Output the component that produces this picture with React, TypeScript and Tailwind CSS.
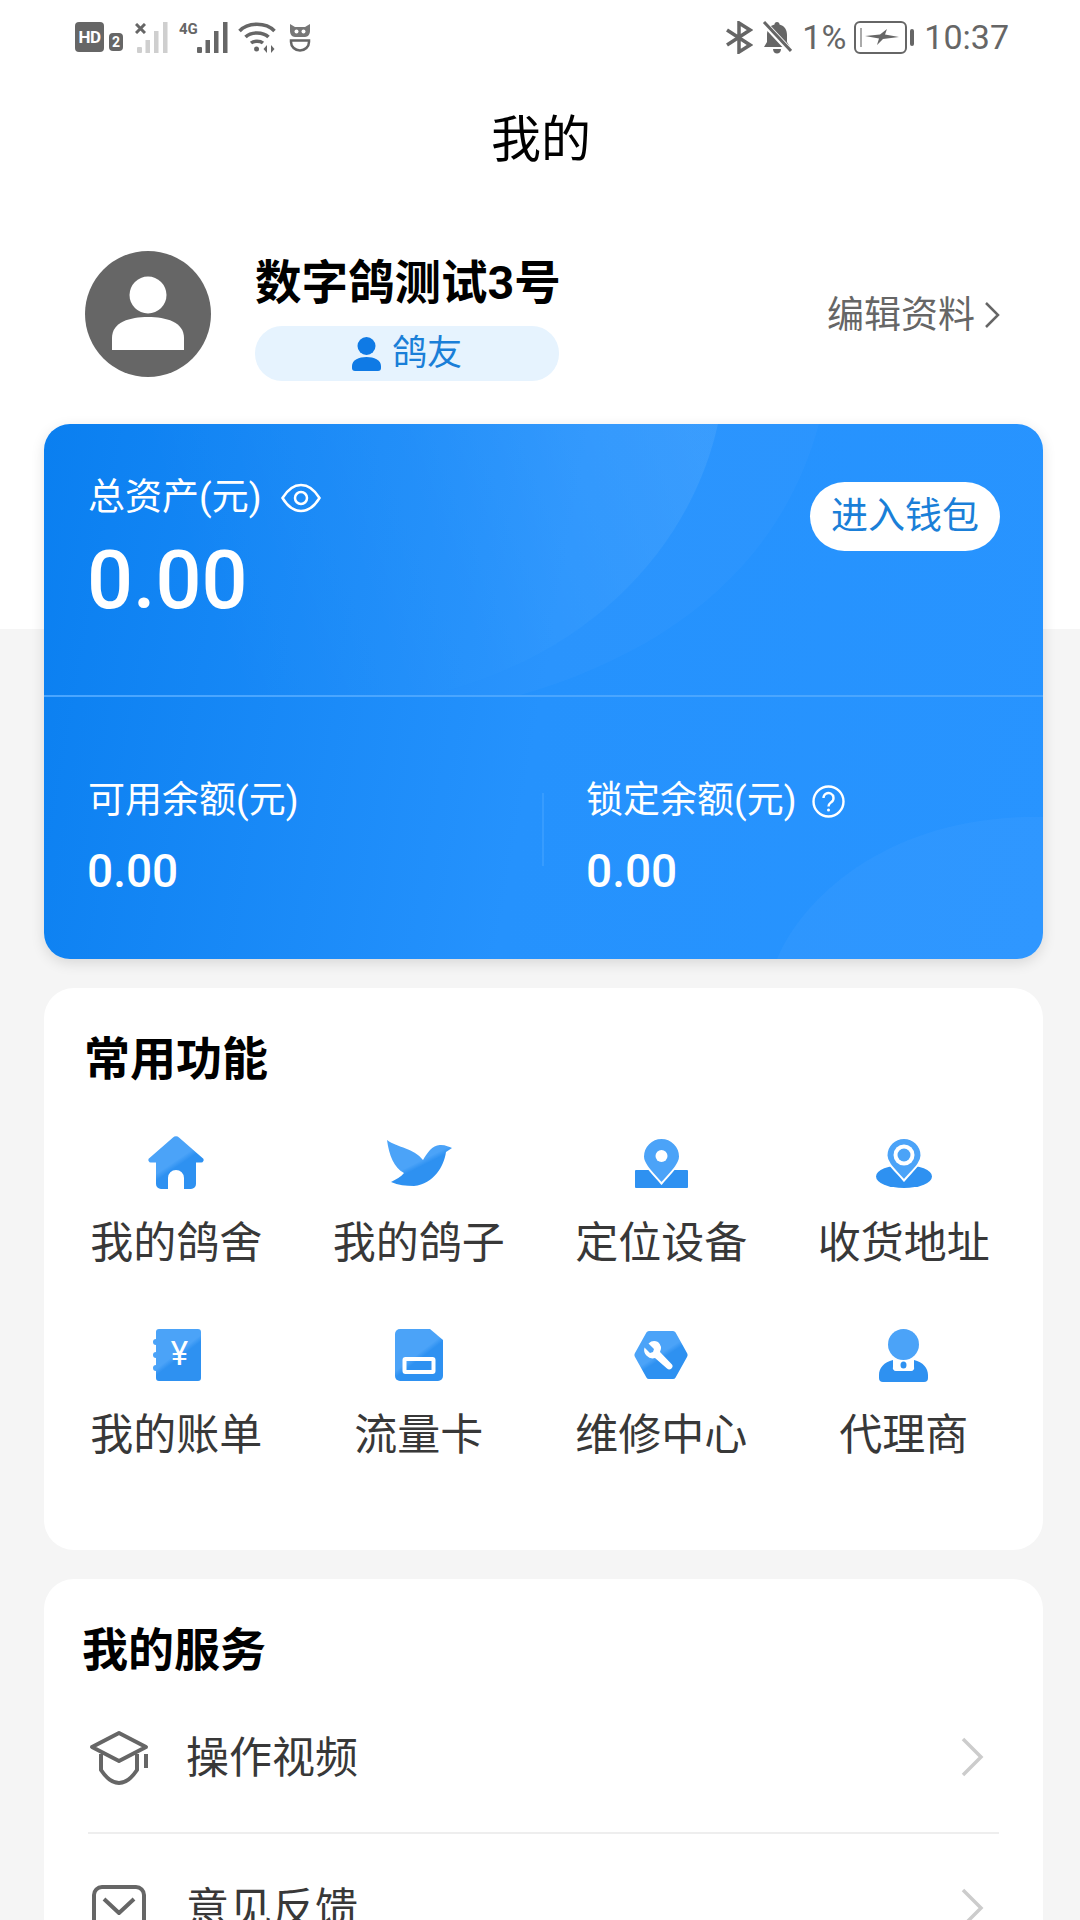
import React from 'react'

const cjk = '[font-family:Roboto,"Noto_Sans_CJK_SC",sans-serif]'

const SvgDefs = () => (
    <svg width="0" height="0" className="block">
        <defs>
            <linearGradient id="iconBlue" x1="0.2" y1="0.1" x2="0.8" y2="0.95">
                <stop offset="0.45" stopColor="#4ba3f8" />
                <stop offset="0.55" stopColor="#2e91f1" />
            </linearGradient>
            <linearGradient id="cardGlow" x1="0" y1="0.5" x2="1" y2="0.35">
                <stop offset="0.2" stopColor="#fff" stopOpacity="0" />
                <stop offset="0.6" stopColor="#fff" stopOpacity="0.03" />
                <stop offset="1" stopColor="#fff" stopOpacity="0.09" />
            </linearGradient>
        </defs>
    </svg>
)

const HomeIcon = () => (
    <svg width="56" height="54" viewBox="0 0 56 54">
        <path fill="url(#iconBlue)" d="M25 1.5a4 4 0 0 1 6 0L54.500 22a2.500 2.500 0 0 1-2 4.500H48V48a5 5 0 0 1-5 5H36V42a8 8 0 0 0-16 0V53H13a5 5 0 0 1-5-5V26.500H3.500A2.500 2.500 0 0 1 1.500 22Z" />
    </svg>
)

const BirdIcon = () => (
    <svg width="66" height="46" viewBox="0 0 66 46">
        <path fill="url(#iconBlue)" d="M1 0C12 8 28 8 37 20C41 13 47 4 55 5C60 5 63 7 66 8L60 12C58 26 48 44 28 46C20 46 12 45 5 42C10 39 15 37 18 33C8 28 3 15 1 0Z" />
    </svg>
)

const MapPinIcon = () => (
    <svg width="53" height="50" viewBox="0 0 53 50">
        <path fill="#2e91f1" d="M1 32H52a1 1 0 0 1 1 1V49a1 1 0 0 1-1 1H1a1 1 0 0 1-1-1V33a1 1 0 0 1 1-1Z" />
        <path fill="#4ba3f8" stroke="#fff" strokeWidth="2" d="M26.500 0a18.500 18.500 0 0 1 18.500 18.500c0 8-10 17-18.500 27C18 35.500 8 26.500 8 18.500A18.500 18.500 0 0 1 26.500 0Z" />
        <circle cx="26.500" cy="18" r="6" fill="#fff" />
    </svg>
)

const AddressIcon = () => (
    <svg width="56" height="50" viewBox="0 0 56 50">
        <ellipse cx="28" cy="38.500" rx="28" ry="11.500" fill="#2e91f1" />
        <path fill="#4ba3f8" stroke="#fff" strokeWidth="2" d="M28 0a17.500 17.500 0 0 1 17.500 17.500c0 8-9 15-17.500 25C20 33 10.500 25.500 10.500 17.500A17.500 17.500 0 0 1 28 0Z" />
        <circle cx="28" cy="17" r="10.500" fill="#fff" />
        <circle cx="28" cy="17" r="6.500" fill="#4ba3f8" />
    </svg>
)

const BillIcon = () => (
    <svg width="49" height="52" viewBox="0 0 49 52">
        <path fill="url(#iconBlue)" d="M7 0H46a3 3 0 0 1 3 3V49a3 3 0 0 1-3 3H7a3 3 0 0 1-3-3V42a3 3 0 0 1 0-6V29a3 3 0 0 1 0-6V16a3 3 0 0 1 0-6V3a3 3 0 0 1 3-3Z" />
        <text x="27.500" y="36" textAnchor="middle" fontSize="33" fontFamily="Roboto" fill="#fff">¥</text>
    </svg>
)

const SimIcon = () => (
    <svg width="48" height="52" viewBox="0 0 48 52">
        <path fill="url(#iconBlue)" d="M5 0H35L48 11V47a5 5 0 0 1-5 5H5a5 5 0 0 1-5-5V5a5 5 0 0 1 5-5Z" />
        <rect x="9.500" y="30" width="29" height="13" rx="1" fill="none" stroke="#fff" strokeWidth="4" />
    </svg>
)

const RepairIcon = () => (
    <svg width="54" height="48" viewBox="0 0 54 48">
        <path fill="url(#iconBlue)" d="M15 0H39a3 3 0 0 1 2.600 1.500L53 22a4 4 0 0 1 0 4L41.600 46.500A3 3 0 0 1 39 48H15a3 3 0 0 1-2.600-1.500L1 26a4 4 0 0 1 0-4L12.400 1.500A3 3 0 0 1 15 0Z" />
        <path fill="#fff" d="M24 11a8.500 8.500 0 0 0-9.500 1.500L20 18l-1 3-3 1-5.500-5.500A8.500 8.500 0 0 0 21 27l12 10.500a3 3 0 0 0 4.500-4.500L26 21a8.500 8.500 0 0 0-2-10Z" />
    </svg>
)

const AgentIcon = () => (
    <svg width="49" height="53" viewBox="0 0 49 53">
        <circle cx="24.500" cy="15.500" r="15.500" fill="#4ba3f8" />
        <path fill="#2e91f1" d="M14 31V38a3 3 0 0 0 3 4H32a3 3 0 0 0 3-4V31C44 33 49 39 49 46V49a4 4 0 0 1-4 4H4a4 4 0 0 1-4-4V46C0 39 5 33 14 31Z" />
        <ellipse cx="24.500" cy="36" rx="3" ry="3.500" fill="#2e91f1" />
    </svg>
)

const features = [
    { name: '我的鸽舍', icon: <HomeIcon /> },
    { name: '我的鸽子', icon: <BirdIcon /> },
    { name: '定位设备', icon: <MapPinIcon /> },
    { name: '收货地址', icon: <AddressIcon /> },
    { name: '我的账单', icon: <BillIcon /> },
    { name: '流量卡', icon: <SimIcon /> },
    { name: '维修中心', icon: <RepairIcon /> },
    { name: '代理商', icon: <AgentIcon /> },
]

function Signal({ color, dim }: { color: string; dim?: boolean }) {
    return (
        <svg width="31" height="31" viewBox="0 0 31 31" className={dim ? 'opacity-40' : ''}>
            <rect x="0" y="25" width="5" height="6" rx="1" fill={color} />
            <rect x="8.500" y="18" width="4.500" height="13" fill={color} />
            <rect x="17" y="9" width="4.500" height="22" fill={color} />
            <rect x="26" y="0" width="4.500" height="31" fill={color} />
        </svg>
    )
}

function StatusBar() {
    return (
        <div className="flex h-[72px] items-center justify-between pl-[75px] pr-[71px] pt-[2px] text-[#666]">
            <div className="flex items-center">
                <div className="flex h-[30px] w-[29px] items-center justify-center rounded-[4px] bg-[#666] font-['Roboto'] text-[17px] font-bold leading-none tracking-[-0.5px] text-white">HD</div>
                <div className="ml-[5px] mt-[10px] flex h-[18px] w-[14px] items-center justify-center rounded-[4px] bg-[#666] font-['Roboto'] text-[14px] font-bold leading-none text-white">2</div>
                <div className="relative ml-[12px] h-[31px] w-[33px]">
                    <svg width="11" height="11" viewBox="0 0 11 11" className="absolute left-0 top-[1px]">
                        <path d="M1 1L10 10M10 1L1 10" stroke="#666" strokeWidth="3" />
                    </svg>
                    <div className="absolute bottom-0 right-0 h-[31px] w-[31px]"><Signal color="#888" dim /></div>
                </div>
                <div className="relative ml-[11px] h-[31px] w-[49px]">
                    <span className="absolute left-0 top-[-3px] font-['Roboto'] text-[15px] font-bold leading-[20px]">4G</span>
                    <div className="absolute bottom-0 right-0"><Signal color="#666" /></div>
                </div>
                <svg width="38" height="31" viewBox="0 0 38 31" className="ml-[10px]" fill="none" stroke="#666" strokeWidth="3.500">
                    <path d="M1.500 9C10 0 28 0 36.500 9" />
                    <path d="M7.500 15C13 9.500 25 9.500 30.500 15" />
                    <path d="M13 21C16 18.500 22 18.500 25 21" />
                    <circle cx="18.500" cy="27" r="2.500" fill="#666" stroke="none" />
                    <path d="M29 23L25.500 27L29 31ZM33 23L36.500 27L33 31Z" fill="#666" stroke="none" />
                </svg>
                <svg width="22" height="29" viewBox="0 0 22 29" className="ml-[13px]">
                    <path fill="#777" d="M1 8L1 1L6 4H16L21 1V8C21 11 19 14 16 14H6C3 14 1 11 1 8Z" />
                    <circle cx="7.500" cy="8.500" r="2" fill="#fff" />
                    <circle cx="14.500" cy="8.500" r="2" fill="#fff" />
                    <path fill="none" stroke="#666" strokeWidth="2.500" d="M2 17.500H20V19a9 8.500 0 0 1-18 0Z" />
                </svg>
            </div>
            <div className="flex items-center">
                <svg width="28" height="33" viewBox="0 0 28 33" fill="none" stroke="#666" strokeWidth="3.500">
                    <path d="M2 9L25 24L14 31V2L25 9L2 24" />
                </svg>
                <svg width="30" height="33" viewBox="0 0 30 33" className="ml-[9px]">
                    <path fill="#666" d="M15 1a2.500 2.500 0 0 1 2.500 2.500C23 5 25 9 25 14V21L28 26H2L5 21V14C5 9 7 5 12.500 3.500A2.500 2.500 0 0 1 15 1Z" />
                    <path d="M11 28H19C19 31 17 32.500 15 32.500S11 31 11 28Z" fill="#666" />
                    <path d="M1 1L30 32" stroke="#fff" strokeWidth="6" />
                    <path d="M2 1L29 30" stroke="#666" strokeWidth="3" />
                </svg>
                <span className="ml-[10px] font-['Roboto'] text-[34px] leading-none">1%</span>
                <div className="ml-[8px] flex h-[33px] w-[53px] items-center rounded-[6px] border-[2.5px] border-[#666] pl-[4px]">
                    <div className="h-[19px] w-[1.5px] bg-[#aaa]" />
                    <svg width="34" height="18" viewBox="0 0 34 18" className="ml-[3px]">
                        <path fill="#666" d="M0 8L15 6.500 22 1 20 6.500 34 9 18 11 12 17 14 10.500Z" />
                    </svg>
                </div>
                <div className="ml-[3px] h-[17px] w-[4px] rounded-[2px] bg-[#666]" />
                <span className="ml-[10px] font-['Roboto'] text-[34px] leading-none">10:37</span>
            </div>
        </div>
    )
}

function Profile() {
    return (
        <div className="mt-[47px] flex h-[130px] pl-[85px] pr-[80px]">
            <div className="flex h-[126px] w-[126px] shrink-0 items-center justify-center rounded-full bg-[#666]">
                <svg width="76" height="76" viewBox="0 0 76 76">
                    <circle cx="38" cy="19" r="18.500" fill="#fff" />
                    <path fill="#fff" d="M2 74V62C2 46 20 41 38 41S74 46 74 62V74Z" />
                </svg>
            </div>
            <div className="ml-[44px] flex w-[304px] flex-col">
                <div className="h-[75px] whitespace-nowrap text-[46.500px] font-bold leading-[64px] text-black">数字鸽测试3号</div>
                <div className="flex h-[55px] items-center justify-center gap-[11px] rounded-[27px] bg-[#e6f3fe]">
                    <svg width="29" height="34" viewBox="0 0 29 34">
                        <circle cx="14.500" cy="9" r="9" fill="#0f7ae5" />
                        <path fill="#0f7ae5" d="M0 29C0 23 7 20 14.500 20S29 23 29 29V31a3 3 0 0 1-3 3H3a3 3 0 0 1-3-3Z" />
                    </svg>
                    <span className="text-[35px] leading-none text-[#1a7fd8]">鸽友</span>
                </div>
            </div>
            <div className="ml-auto flex h-[128px] items-center text-[#666]">
                <span className="text-[37px] leading-none">编辑资料</span>
                <svg width="16" height="28" viewBox="0 0 16 28" className="ml-[9px]" fill="none" stroke="#666" strokeWidth="2.500">
                    <path d="M2 2L14 14L2 26" />
                </svg>
            </div>
        </div>
    )
}

function WalletCard() {
    return (
        <div className="relative ml-[44px] mt-[43px] h-[535px] w-[999px] overflow-hidden rounded-[26px] bg-[linear-gradient(100deg,#0a7ff0_0%,#2592fd_50%,#2894ff_100%)] text-white shadow-[0_4px_14px_rgba(0,0,0,0.12)]">
            <svg width="999" height="535" viewBox="0 0 999 535" className="absolute inset-0">
                <path fill="#ffffff" fillOpacity="0.025" d="M775 0C740 130 640 225 470 273H380C560 230 650 110 674 0Z" />
                <path fill="url(#cardGlow)" d="M674 0C650 110 560 230 380 273H0V0Z" />
                <path fill="#ffffff" fillOpacity="0.035" d="M733 535C760 470 850 390 999 393V535Z" />
            </svg>
            <div className="relative h-[273px] border-b-2 border-[#4aa6ff] px-[44px]">
                <div className="flex items-center pt-[56px]">
                    <span className="text-[37px] leading-[36px]">总资产(元)</span>
                    <svg width="40" height="30" viewBox="0 0 40 30" className="ml-[19px]" fill="none" stroke="#fff" strokeWidth="2.500">
                        <path d="M1.500 15C7 6 13 2 20 2S33 6 38.500 15C33 24 27 28 20 28S7 24 1.500 15Z" />
                        <circle cx="20" cy="15" r="6" />
                    </svg>
                </div>
                <div className="ml-[-1px] mt-[25px] font-['Roboto'] text-[81px] font-medium leading-[80px]">0.00</div>
                <div className="absolute right-[43px] top-[58px] flex h-[69px] w-[190px] items-center justify-center rounded-[35px] bg-white text-[37px] leading-none text-[#1a7fd8]">进入钱包</div>
            </div>
            <div className="relative flex pt-[86px]">
                <div className="w-[498px] pl-[44px]">
                    <div className="text-[37px] leading-[36px]">可用余额(元)</div>
                    <div className="ml-[-1px] mt-[29px] font-['Roboto'] text-[46px] font-medium leading-[46px]">0.00</div>
                </div>
                <div className="mt-[10px] h-[73px] w-[2px] bg-[#4aa6ff]/50" />
                <div className="pl-[42px]">
                    <div className="flex items-center">
                        <span className="text-[37px] leading-[36px]">锁定余额(元)</span>
                        <svg width="33" height="33" viewBox="0 0 33 33" className="ml-[15px]" fill="none" stroke="#fff" strokeWidth="2.400">
                            <circle cx="16.500" cy="16.500" r="15" />
                            <path d="M11.500 13a5 5 0 1 1 8 4c-2 1.500-3 2-3 4.500" />
                            <circle cx="16.500" cy="25" r="1.500" fill="#fff" stroke="none" />
                        </svg>
                    </div>
                    <div className="mt-[29px] font-['Roboto'] text-[46px] font-medium leading-[46px]">0.00</div>
                </div>
            </div>
        </div>
    )
}

function FeatureCard() {
    return (
        <div className="ml-[44px] mt-[29px] h-[562px] w-[999px] rounded-[30px] bg-white pl-[11px] pr-[18px]">
            <div className="pl-[29px] pt-[41px] text-[46px] font-bold leading-[60px] text-black">常用功能</div>
            <div className="mt-[46px] grid grid-cols-4 gap-y-[54px]">
                {features.map((f) => (
                    <div key={f.name} className="flex flex-col items-center">
                        <div className="flex h-[56px] items-center justify-center">{f.icon}</div>
                        <div className="mt-[22px] text-[43px] leading-[60px] text-[#383838]">{f.name}</div>
                    </div>
                ))}
            </div>
        </div>
    )
}

const Chevron = () => (
    <svg width="24" height="40" viewBox="0 0 24 40" className="mb-[2px] ml-auto" fill="none" stroke="#ccc" strokeWidth="3.500">
        <path d="M3 2L21 20L3 38" />
    </svg>
)

function ServiceRow({ icon, name, divider }: { icon: React.ReactNode; name: string; divider?: boolean }) {
    return (
        <div className={`flex h-[150px] items-center pr-[15px] ${divider ? 'border-b-2 border-[#eee]' : ''}`}>
            <div className="flex w-[62px] justify-center">{icon}</div>
            <span className="ml-[36px] text-[43px] leading-none text-[#383838]">{name}</span>
            <Chevron />
        </div>
    )
}

export default function App() {
    return (
        <div className={`h-[1920px] w-[1080px] overflow-hidden bg-[linear-gradient(#fff_0px,#fff_629px,#f5f5f5_629px)] ${cjk}`}>
            <SvgDefs />
            <StatusBar />
            <div className="flex h-[132px] items-center justify-center pl-[2px] pt-[4px] text-[50px] leading-none text-black">我的</div>
            <Profile />
            <WalletCard />
            <FeatureCard />
            <div className="ml-[44px] mt-[29px] w-[999px] rounded-t-[30px] bg-white pb-[40px]">
                <div className="h-[105px] pl-[38px] pt-[41px] text-[46px] font-bold leading-[60px] text-black">我的服务</div>
                <div className="mx-[44px]">
                    <ServiceRow
                        divider
                        name="操作视频"
                        icon={
                            <svg width="62" height="56" viewBox="0 0 62 56" fill="none" stroke="#666" strokeWidth="4" strokeLinejoin="round">
                                <path d="M31 3L58 17L31 31L4 17Z" />
                                <path d="M13 24V40C19 49 25 53 31 53S43 49 49 40V24" />
                                <path d="M58 24V38" />
                            </svg>
                        }
                    />
                    <ServiceRow
                        name="意见反馈"
                        icon={
                            <svg width="54" height="48" viewBox="0 0 54 48" fill="none" stroke="#666" strokeWidth="4" strokeLinejoin="round">
                                <rect x="2" y="2" width="50" height="44" rx="8" />
                                <path d="M12 14L27 28L42 14" />
                            </svg>
                        }
                    />
                </div>
            </div>
        </div>
    )
}
